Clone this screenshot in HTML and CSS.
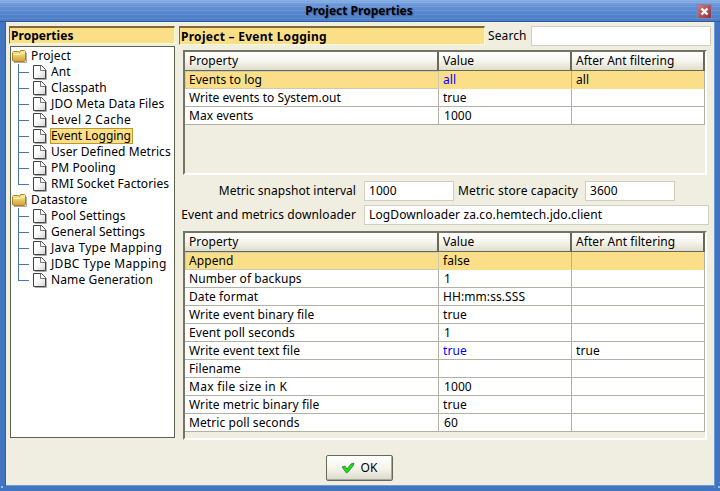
FILE: index.html
```html
<!DOCTYPE html>
<html lang="en">
<head>
<meta charset="utf-8">
<title>Project Properties</title>
<link rel="stylesheet" href="styles.css">
</head>
<body>
<svg class="defs" width="0" height="0">
  <defs>
    <linearGradient id="gold" x1="0" y1="0" x2="0" y2="1"><stop offset="0" stop-color="#fff0a0"/><stop offset="1" stop-color="#d2a02c"/></linearGradient>
    <linearGradient id="paper" x1="0" y1="0" x2="1" y2="1"><stop offset="0.4" stop-color="#fff"/><stop offset="1" stop-color="#d4d4d4"/></linearGradient>
    <symbol id="page" viewBox="0 0 14 15">
      <path d="M2 14.5H13.5V5" fill="none" stroke="#aaa"/>
      <path d="M.5 .5H8.500L12.500 4.500V13.500H.5Z" fill="url(#paper)" stroke="#444"/>
      <path d="M7.500 1V5.500H12" fill="none" stroke="#777"/>
    </symbol>
    <symbol id="folder" viewBox="0 0 16 14">
      <path d="M2 13.5H14.5V4" fill="none" stroke="#aaa"/>
      <path d="M.5 3.500L1.500 2.500H6.500L7.500 3.500L8.500 1.500H12.500L13.500 2.500V11.500L12.500 12.500H1.500L.5 11.500Z" fill="url(#gold)" stroke="#a8842c"/>
      <path d="M1.500 5.500H8L9.500 4.500H12.500" fill="none" stroke="#fff3b0"/>
    </symbol>
  </defs>
</svg>
<div class="window">
  <header class="titlebar"><h1>Project Properties</h1>
    <button class="close" aria-label="Close"><svg width="9" height="9" viewBox="0 0 9 9"><path d="M1.500 1.500L7.500 7.500M7.500 1.500L1.500 7.500" stroke="#fff" stroke-width="2.400"/></svg></button>
  </header>
  <main class="content">
    <aside class="side">
      <h2 class="heading">Properties</h2>
      <div class="tree">
        <div class="branch"><svg width="16" height="14"><use href="#folder"/></svg><span>Project</span></div>
        <ul>
          <li><svg width="14" height="15"><use href="#page"/></svg><span>Ant</span></li>
          <li><svg width="14" height="15"><use href="#page"/></svg><span>Classpath</span></li>
          <li><svg width="14" height="15"><use href="#page"/></svg><span>JDO Meta Data Files</span></li>
          <li><svg width="14" height="15"><use href="#page"/></svg><span class="loose">Level 2 Cache</span></li>
          <li><svg width="14" height="15"><use href="#page"/></svg><span class="current">Event Logging</span></li>
          <li><svg width="14" height="15"><use href="#page"/></svg><span class="tight">User Defined Metrics</span></li>
          <li><svg width="14" height="15"><use href="#page"/></svg><span class="tight">PM Pooling</span></li>
          <li><svg width="14" height="15"><use href="#page"/></svg><span class="tight">RMI Socket Factories</span></li>
        </ul>
        <div class="branch"><svg width="16" height="14"><use href="#folder"/></svg><span>Datastore</span></div>
        <ul>
          <li><svg width="14" height="15"><use href="#page"/></svg><span class="tight">Pool Settings</span></li>
          <li><svg width="14" height="15"><use href="#page"/></svg><span class="tight">General Settings</span></li>
          <li><svg width="14" height="15"><use href="#page"/></svg><span class="loose">Java Type Mapping</span></li>
          <li><svg width="14" height="15"><use href="#page"/></svg><span class="loose">JDBC Type Mapping</span></li>
          <li><svg width="14" height="15"><use href="#page"/></svg><span>Name Generation</span></li>
        </ul>
      </div>
    </aside>
    <section class="detail">
      <div class="top">
        <h2 class="heading">Project – Event Logging</h2>
        <span class="search-label">Search</span><div class="field search"></div>
      </div>
      <div class="grid events">
        <div class="row head"><span>Property</span><span>Value</span><span>After Ant filtering</span></div>
        <div class="row selected"><span>Events to log</span><span class="set">all</span><span>all</span></div>
        <div class="row"><span>Write events to System.out</span><span>true</span><span></span></div>
        <div class="row"><span>Max events</span><span class="num">1000</span><span></span></div>
      </div>
      <div class="form">
        <span class="label">Metric snapshot interval</span><div class="field short num">1000</div>
        <span class="label mid">Metric store capacity</span><div class="field short num">3600</div>
      </div>
      <div class="form">
        <span class="label wide">Event and metrics downloader</span><div class="field long">LogDownloader za.co.hemtech.jdo.client</div>
      </div>
      <div class="grid settings">
        <div class="row head"><span>Property</span><span>Value</span><span>After Ant filtering</span></div>
        <div class="row selected"><span>Append</span><span>false</span><span></span></div>
        <div class="row"><span>Number of backups</span><span class="num">1</span><span></span></div>
        <div class="row"><span>Date format</span><span>HH:mm:ss.SSS</span><span></span></div>
        <div class="row"><span>Write event binary file</span><span>true</span><span></span></div>
        <div class="row"><span>Event poll seconds</span><span class="num">1</span><span></span></div>
        <div class="row"><span>Write event text file</span><span class="set">true</span><span>true</span></div>
        <div class="row"><span>Filename</span><span></span><span></span></div>
        <div class="row"><span class="roomy">Max file size in K</span><span class="num">1000</span><span></span></div>
        <div class="row"><span>Write metric binary file</span><span>true</span><span></span></div>
        <div class="row"><span>Metric poll seconds</span><span class="num">60</span><span></span></div>
      </div>
    </section>
  </main>
  <footer><button class="ok"><svg width="14" height="13" viewBox="0 0 14 13"><path d="M1 5L4 4L6 7L10 2L13 1L12 4L7 10L5.500 11L4 9Z" fill="#00f000" stroke="#5c7c5c"/></svg><span>OK</span></button></footer>
  <i class="grip left"></i><i class="grip right"></i>
</div>
</body>
</html>
```

FILE: styles.css
```css
* { box-sizing: border-box; }
body { margin: 0; font: 12px/16px "Noto Sans", sans-serif; color: #000; overflow: hidden; letter-spacing: .03px; }
.defs { position: absolute; }
h1, h2, ul { margin: 0; padding: 0; list-style: none; }
span { white-space: pre; }
svg { flex: none; display: block; }
.window { position: relative; width: 720px; height: 491px; background: #f0eee1; border: solid #4275bf; border-width: 0 5px 5px; display: flex; flex-direction: column; box-shadow: inset 1px 0 #31609f, inset -1px -1px #6b9bd8; }
.titlebar { height: 22px; flex: none; margin: 0 -5px; position: relative; display: flex; justify-content: center; border-bottom: 1px solid #2e5c9c; background: repeating-linear-gradient(#fff0 0 2px, #ffffff18 2px 3px, #fff0 3px 4px), linear-gradient(#8ab0e6, #6794d6 25%, #5485cc 65%, #4a7bc4); }
h1 { font-size: 12px; line-height: 21px; font-weight: 700; padding-right: 2px; letter-spacing: 0; text-shadow: 1px 1px 1px #3a62a4; }
.close { position: absolute; right: 8px; top: 4px; width: 15px; height: 15px; padding: 2px; border: 1px solid #7688b9; background: linear-gradient(135deg, #d07a80, #8e2f3a); }
.content { display: flex; height: 418px; }
.side { width: 166px; margin: 4px 4px 0; flex: none; }
.heading { font-size: 12px; font-weight: 700; white-space: nowrap; background: #fadf88; border: solid; border-width: 2px 1px 1px; border-color: #806830 #fffbd0 #fffbd0 #806830; padding-left: 1px; line-height: 15px; height: 18px; }
.tree { margin: 2px 0 0 1px; width: 165px; height: 392px; background: #fff; border: 1px solid #5f614f; padding: 1px 0 0 1px; letter-spacing: .12px; }
.branch { display: flex; height: 16px; align-items: center; gap: 3px; }
.tree li { display: flex; height: 16px; align-items: center; margin-left: 6px; padding-left: 15px; position: relative; gap: 3px; }
.tree li > span { padding: 0 1px 0 0; height: 16px; border: 1px solid transparent; line-height: 14px; }
.tree li > .current { background: #fadf88; border-color: #bd9828; letter-spacing: -.05px; }
.tree .tight { letter-spacing: .07px; }
.tree .loose { letter-spacing: .3px; }
.tree li::before { content: ""; position: absolute; left: 0; top: 0; width: 10px; height: 8px; border: solid #4c74b4; border-width: 0 0 1px 1px; }
.tree li:not(:last-child)::after { content: ""; position: absolute; left: 0; top: 8px; height: 8px; border-left: 1px solid #4c74b4; }
.detail { width: 532px; }
.top { display: flex; height: 24px; margin: 4px 0 4px; }
.top > .heading { width: 306px; height: 19px; line-height: 17px; letter-spacing: .27px; }
.search-label { width: 46px; padding-left: 3px; line-height: 20px; letter-spacing: .1px; }
.field { height: 20px; border: 1px solid #d0cfbf; background: #fff; line-height: 18px; padding-left: 4px; white-space: pre; }
.search { width: 180px; }
.grid { width: 524px; margin-left: 4px; border: 2px solid; border-color: #747464 #fff #fff #747464; }
.events { height: 125px; margin-top: -4px; }
.settings { height: 209px; margin-top: 6px; }
.row { display: grid; grid-template-columns: 254px 133px 133px; height: 18px; width: 520px; }
.row > span { background: #fff; border: solid #b0b0a4; border-width: 0 1px 1px 0; line-height: 17px; padding-left: 4px; }
.row.head { height: 19px; }
.row.head > span { background: linear-gradient(#fff, #f6f5ee 50%, #dfddca); border: solid #676957; border-width: 0 2px 2px 0; line-height: 18px; margin-bottom: 1px; }
.row.selected > span { background: #fadf88; border-bottom-color: #fadf88; }
.row.selected > span:first-child { border: 1px solid #cdcaaf; padding-left: 3px; line-height: 16px; }
.row > .set { color: #00f; }
.row > .num { padding-left: 5px; }
.row > .roomy { letter-spacing: .3px; }
.settings { letter-spacing: .08px; }
.form { display: flex; height: 20px; margin-top: 6px; }
.form + .form { margin-top: 4px; }
.label { width: 185px; text-align: right; padding-right: 8px; line-height: 20px; }
.label.wide { letter-spacing: .12px; }
.label.mid { width: 131px; padding-right: 7px; letter-spacing: .15px; }
.short { width: 90px; }
.long { width: 345px; letter-spacing: .11px; }
footer { display: flex; justify-content: center; padding: 15px 2px 0 0; }
.ok { width: 67px; height: 26px; display: flex; align-items: center; justify-content: center; gap: 6px; padding: 0; font: inherit; border: 1px solid #676957; border-radius: 2px; background: linear-gradient(#fff, #f6f5ee 50%, #dbd9c8); box-shadow: inset -1px -1px #a8a999; }
.grip { position: absolute; bottom: -4px; width: 8px; height: 8px; background: radial-gradient(circle at 2px 2px, #9ebce6 1px, #0000 1.500px) 0 3px / 5px 5px; }
.grip.left { left: -5px; clip-path: polygon(0 0, 100% 100%, 0 100%); }
.grip.right { right: -5px; clip-path: polygon(100% 0, 100% 100%, 0 100%); }
```
